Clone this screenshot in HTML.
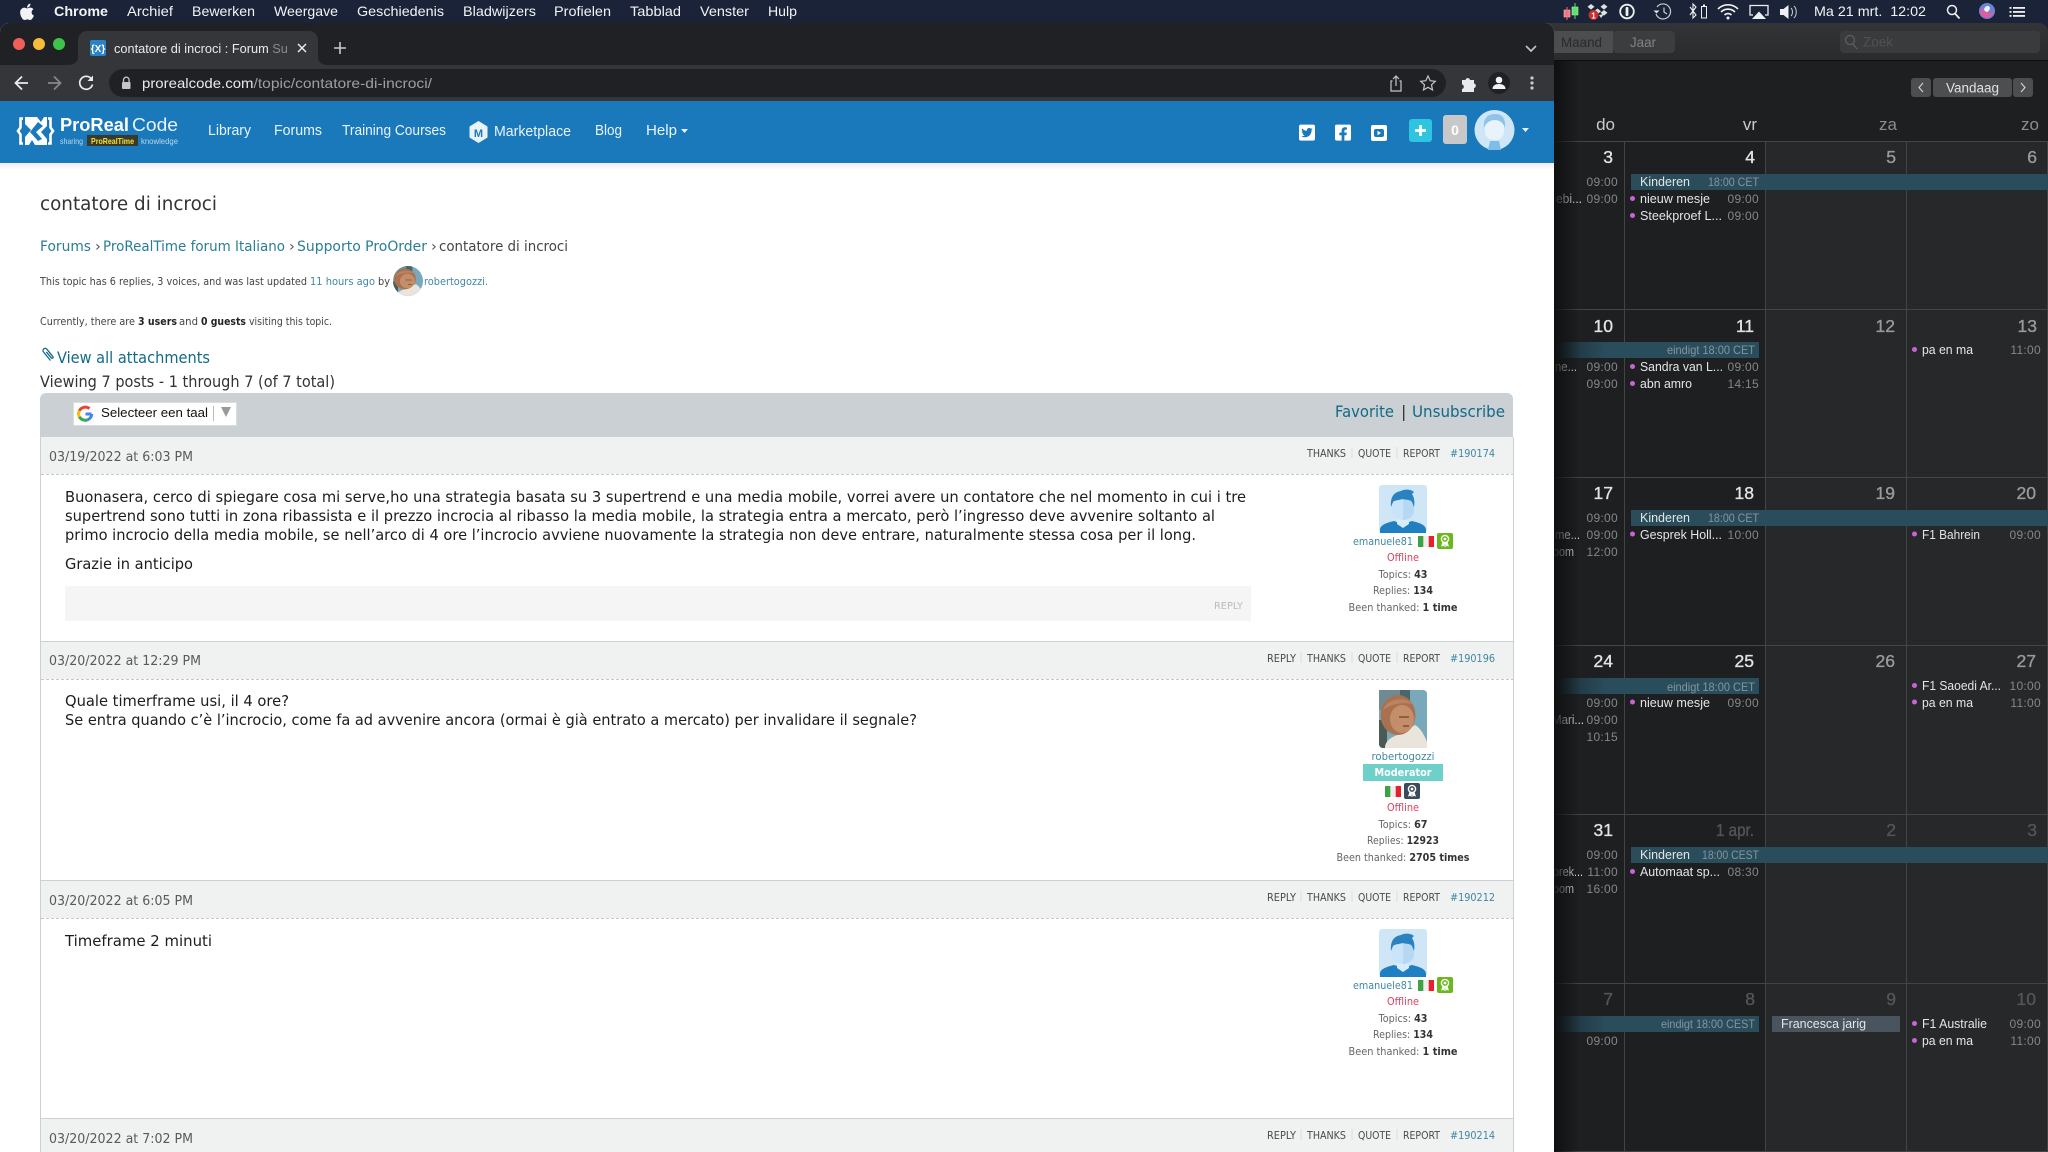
<!DOCTYPE html>
<html><head><meta charset="utf-8"><title>contatore di incroci</title>
<style>
html,body{margin:0;padding:0;background:#1a2338;width:2048px;height:1152px;overflow:hidden}
svg{display:block}
text{font-family:"Liberation Sans",sans-serif;white-space:pre}
.os{font-family:"DejaVu Sans",sans-serif}
.mb{font-size:14px;fill:#f2f3f5}
.ev{font-size:13px;fill:#e4e5e6}
.t{font-size:12px;fill:#858687;text-anchor:end;letter-spacing:.3px}
.bt{font-size:12px;fill:#83959e;text-anchor:end}
.n{font-size:17.5px;text-anchor:end;stroke-width:.35px}
.b{fill:#e2e3e4;stroke:#e2e3e4}.g{fill:#9a9b9c;stroke:#9a9b9c}.d{fill:#545557;stroke:#545557}
.nav{font-size:14.5px;fill:#eaf3fa}
.lk{font-size:10.3px;fill:#4a4a4a}
.hs{font-size:10.3px;fill:#3f88a3}
.dt{font-size:13.5px;fill:#5a5a5a}
.p{font-size:15.5px;fill:#1d1d1d}
.s{font-size:11px;fill:#666;text-anchor:middle}
.s tspan{font-weight:bold;fill:#333}
.of{font-size:11px;fill:#e0405a;text-anchor:middle}
.nm{font-size:11px;fill:#3f88a3}
</style></head>
<body>
<svg width="2048" height="1152" viewBox="0 0 2048 1152" xmlns="http://www.w3.org/2000/svg">
<defs>
<linearGradient id="fade" x1="0" x2="1" y1="0" y2="0"><stop offset="0" stop-color="#0e0f10" stop-opacity=".95"/><stop offset="1" stop-color="#0e0f10" stop-opacity="0"/></linearGradient>
<linearGradient id="bandf" x1="0" x2="1" y1="0" y2="0"><stop offset="0" stop-color="#1c2b33"/><stop offset=".25" stop-color="#2a4d5c"/></linearGradient>
<linearGradient id="navsh" x1="0" x2="0" y1="0" y2="1"><stop offset="0" stop-color="#000" stop-opacity=".07"/><stop offset="1" stop-color="#000" stop-opacity="0"/></linearGradient>
<linearGradient id="tb" x1="0" x2="0" y1="0" y2="1"><stop offset="0" stop-color="#333436"/><stop offset="1" stop-color="#2a2b2d"/></linearGradient>
<symbol id="man" viewBox="0 0 48 48">
<rect width="48" height="48" rx="3" fill="#cfe6f7"/>
<path d="M1 48v-3c0-5 6-7 14-9l9 3 9-3c8 2 14 4 14 9v3z" fill="#1f7fc1"/>
<path d="M18 32h12v7l-6 4-6-4z" fill="#d8edfb"/>
<path d="M13 18c0-8 5-11 11-11s11 3 11 11v7c0 6-5 10-11 10s-11-4-11-10z" fill="#c9e3f8"/>
<path d="M24 8c6 0 11 3 11 10v7c0 6-5 10-11 10z" fill="#b6d8f3"/>
<path d="M12 22c-1-10 3-15 10-16 3-2 10-2 13 1l-2 2c2 3 3 7 2 13l-2-5c-2-3-8-2-9-3-3 1-8 1-10 3z" fill="#2a82c0"/>
</symbol>
<symbol id="photo" viewBox="0 0 48 58" preserveAspectRatio="none">
<rect width="48" height="58" rx="4" fill="#7aa8bb"/>
<rect x="0" y="0" width="22" height="20" fill="#6f8a92"/>
<rect x="21" y="0" width="10" height="24" fill="#48666c"/>
<path d="M0 30h8v28H4a4 4 0 0 1-4-4z" fill="#4a5a55"/>
<path d="M6 58c0-8 8-12 16-14l14-9c6 3 10 12 12 17v6z" fill="#e9e5dd"/>
<ellipse cx="19" cy="25" rx="17.500" ry="20" fill="#a9714f"/>
<ellipse cx="23" cy="29" rx="12" ry="14" fill="#c58e6b"/>
<path d="M4 20c3-10 20-15 30-6-10-2-20-1-30 6z" fill="#bb8360"/>
<path d="M20 27h10M24 36h6" stroke="#7c4e36" stroke-width="1.500"/>
</symbol>
<symbol id="flag" viewBox="0 0 16 11"><rect width="5.400" height="11" fill="#3da245"/><rect x="5.400" width="5.400" height="11" fill="#eeeeee"/><rect x="10.700" width="5.300" height="11" fill="#e8202a"/></symbol>
<symbol id="rib" viewBox="0 0 16 16"><circle cx="8" cy="6" r="3.600" fill="none" stroke="#fff" stroke-width="1.400"/><circle cx="8" cy="6" r="1.400" fill="#fff"/><path d="M5.500 9l-1.500 4.600 2.200-.8 1.200 1.400.6-4zM10.500 9l1.500 4.600-2.200-.8-1.200 1.400-.6-4z" fill="#fff"/></symbol>
<clipPath id="tabc"><rect x="110" y="36" width="178" height="24"/></clipPath>
<clipPath id="win"><path d="M0 32a9 9 0 0 1 9-9h1536a9 9 0 0 1 9 9v1120H0z"/></clipPath>
<clipPath id="cal"><path d="M1540 23h499a9 9 0 0 1 9 9v1120h-508z"/></clipPath>
</defs>

<!-- menu bar -->
<rect width="2048" height="23" fill="#1a2338"/>
<path transform="translate(20 2.500) scale(.0365)" fill="#f2f3f5" d="M318.700 268.700c-.2-36.700 16.400-64.400 50-84.800-18.800-26.900-47.200-41.700-84.700-44.600-35.500-2.800-74.300 20.700-88.500 20.700-15 0-49.400-19.700-76.400-19.700C63.300 141.200 4 184.800 4 273.500q0 39.300 14.400 81.200c12.800 36.700 59 126.700 107.200 125.200 25.200-.6 43-17.900 75.800-17.900 31.800 0 48.300 17.900 76.400 17.900 48.600-.7 90.400-82.500 102.600-119.300-65.200-30.700-61.700-90-61.700-91.900zm-56.600-164.200c27.300-32.400 24.800-61.900 24-72.500-24.100 1.400-52 16.400-67.900 34.900-17.500 19.800-27.800 44.300-25.600 71.900 26.100 2 49.900-11.400 69.500-34.300z"/>
<text class="mb" x="54" y="16" font-weight="bold" textLength="54" lengthAdjust="spacingAndGlyphs">Chrome</text>
<text class="mb" x="127" y="16" textLength="46" lengthAdjust="spacingAndGlyphs">Archief</text>
<text class="mb" x="192" y="16" textLength="63" lengthAdjust="spacingAndGlyphs">Bewerken</text>
<text class="mb" x="274" y="16" textLength="64" lengthAdjust="spacingAndGlyphs">Weergave</text>
<text class="mb" x="357" y="16" textLength="87" lengthAdjust="spacingAndGlyphs">Geschiedenis</text>
<text class="mb" x="463" y="16" textLength="73" lengthAdjust="spacingAndGlyphs">Bladwijzers</text>
<text class="mb" x="554" y="16" textLength="57" lengthAdjust="spacingAndGlyphs">Profielen</text>
<text class="mb" x="630" y="16" textLength="51" lengthAdjust="spacingAndGlyphs">Tabblad</text>
<text class="mb" x="700" y="16" textLength="49" lengthAdjust="spacingAndGlyphs">Venster</text>
<text class="mb" x="768" y="16" textLength="29" lengthAdjust="spacingAndGlyphs">Hulp</text>
<!-- status icons -->
<rect x="1564" y="10" width="6" height="7" fill="#f07a8a" stroke="#ffb0bc" stroke-width=".6"/><path d="M1567 7v13" stroke="#f06a7a"/>
<rect x="1572" y="7" width="6" height="8" fill="#5fe06a" stroke="#a8f2ae" stroke-width=".6"/><path d="M1575 3v16" stroke="#5fe06a"/>
<g fill="#dfe1e4"><path d="M1591 4l3.500 2.800-3.500 2.800-3.500-2.800zM1604 4l3.500 2.800-3.500 2.800-3.500-2.800zM1597.500 8.500l3.500 2.800-3.500 2.800-3.500-2.800zM1604 10l3.500 2.800-3.500 2.800-3.500-2.800zM1599 15l5-1-3 4z"/></g><circle cx="1593.500" cy="15" r="5" fill="#c9302c"/><text x="1593.500" y="18.500" font-size="8" fill="#fff" text-anchor="middle" font-weight="bold">1</text>
<circle cx="1627" cy="11.500" r="6.800" fill="none" stroke="#eef0f2" stroke-width="1.800"/><rect x="1625.600" y="7" width="2.800" height="9" rx="1" fill="#eef0f2"/>
<g fill="none" stroke="#c9ccd0" stroke-width="1.200"><path d="M1657 7a7.500 7.500 0 1 1-1 7"/><path d="M1664 7.500v4.500l3 2"/></g><path d="M1653.500 10.500h6l-3 3z" fill="#dfe1e4"/>
<path d="M1690 7l6 8-3 3V4l3 3-6 8" fill="none" stroke="#eef0f2" stroke-width="1.100"/>
<rect x="1701.500" y="6.500" width="5" height="11.500" fill="none" stroke="#eef0f2" stroke-width="1"/><rect x="1703" y="4.500" width="2" height="1.500" fill="#eef0f2"/>
<g fill="none" stroke="#eef0f2" stroke-width="1.700"><path d="M1718 9a14 14 0 0 1 20 0M1721 12a10 10 0 0 1 14 0M1724.500 15a5 5 0 0 1 7 0"/></g><circle cx="1728" cy="18" r="1.500" fill="#eef0f2"/>
<path d="M1753 15h-3V5.500h18V15h-3" fill="none" stroke="#eef0f2" stroke-width="1.300"/><path d="M1752 19l7-7.500 7 7.500z" fill="#eef0f2"/>
<path d="M1780 9h3.500l5-4v14l-5-4H1780z" fill="#eef0f2"/><path d="M1791 8c2 2 2 6 0 8M1794 6c3 3 3 9 0 12" fill="none" stroke="#c9ccd0"/>
<text class="mb" x="1814" y="16" textLength="112" lengthAdjust="spacingAndGlyphs">Ma 21 mrt.  12:02</text>
<circle cx="1952" cy="10" r="4.500" fill="none" stroke="#eef0f2" stroke-width="1.500"/><path d="M1955 13.500l4.500 5" stroke="#eef0f2" stroke-width="1.700"/>
<circle cx="1987" cy="11" r="8" fill="#6a83d6"/><path d="M1980 12c3-6 5-3 7-1s4 4 7-1c-1 5-4 8-7 8s-6-2-7-6z" fill="#e05ca0"/><path d="M1984 9c2-4 5-4 6-1-1 5-5 5-6 1z" fill="#e8f4ff"/>
<g fill="#eef0f2"><rect x="2013" y="7" width="12" height="1.800"/><rect x="2013" y="11" width="12" height="1.800"/><rect x="2013" y="15" width="12" height="1.800"/><rect x="2009.500" y="7" width="2" height="1.800"/><rect x="2009.500" y="11" width="2" height="1.800"/><rect x="2009.500" y="15" width="2" height="1.800"/></g>

<!-- calendar window -->
<g clip-path="url(#cal)">
<rect x="1540" y="23" width="508" height="1129" fill="#1e1f21"/>
<rect x="1765" y="141" width="283" height="1011" fill="#27282a"/>
<rect x="1540" y="23" width="508" height="37" fill="url(#tb)"/>
<rect x="1540" y="60" width="508" height="1" fill="#0d0d0e"/>
<rect x="1554" y="31" width="59" height="22" fill="#4c4d4f"/>
<rect x="1613" y="31" width="62" height="22" rx="4" fill="#3c3d3f"/>
<text x="1561" y="47" font-size="14" fill="#2a2a2b" textLength="41" lengthAdjust="spacingAndGlyphs">Maand</text>
<text x="1630" y="47" font-size="14" fill="#818284" textLength="26" lengthAdjust="spacingAndGlyphs">Jaar</text>
<rect x="1840" y="31" width="200" height="22" rx="4" fill="#3a3b3d"/>
<circle cx="1850" cy="40" r="4.500" fill="none" stroke="#5f6062" stroke-width="1.200"/><path d="M1853 44l4 5" stroke="#5f6062" stroke-width="1.200"/>
<text x="1863" y="46.500" font-size="13.500" fill="#505153">Zoek</text>
<rect x="1911" y="78" width="20" height="19" rx="3" fill="#4d4e50"/>
<rect x="1933" y="78" width="79" height="19" rx="3" fill="#4d4e50"/>
<rect x="2013" y="78" width="20" height="19" rx="3" fill="#4d4e50"/>
<path d="M1923 83l-4 4.500 4 4.500M2021 83l4 4.500-4 4.500" fill="none" stroke="#d6d7d8" stroke-width="1.100"/>
<text x="1946" y="92.500" font-size="13.500" fill="#e0e1e2" textLength="53" lengthAdjust="spacingAndGlyphs">Vandaag</text>
<text x="1615" y="130" font-size="17" fill="#c9cacb" text-anchor="end">do</text>
<text x="1757" y="130" font-size="17" fill="#c9cacb" text-anchor="end">vr</text>
<text x="1897" y="130" font-size="17" fill="#8b8c8d" text-anchor="end">za</text>
<text x="2039" y="130" font-size="17" fill="#8b8c8d" text-anchor="end">zo</text>
<g stroke="#434446" stroke-width="1">
<path d="M1540 141.500H2048M1540 309.500H2048M1540 477.500H2048M1540 645.500H2048M1540 814.500H2048M1540 983.500H2048M1540 1151.500H2048"/>
<path d="M1624.500 141V1152M1765.500 141V1152M1906.500 141V1152M2047.500 141V1152"/>
</g>
<text class="n b" x="1613" y="163">3</text><text class="n b" x="1755" y="163">4</text><text class="n g" x="1896" y="163">5</text><text class="n g" x="2037" y="163">6</text>
<text class="n b" x="1613" y="332">10</text><text class="n b" x="1754" y="332">11</text><text class="n g" x="1895" y="332">12</text><text class="n g" x="2037" y="332">13</text>
<text class="n b" x="1613" y="499">17</text><text class="n b" x="1754" y="499">18</text><text class="n g" x="1895" y="499">19</text><text class="n g" x="2036" y="499">20</text>
<text class="n b" x="1613" y="667">24</text><text class="n b" x="1754" y="667">25</text><text class="n g" x="1895" y="667">26</text><text class="n g" x="2036" y="667">27</text>
<text class="n b" x="1613" y="836">31</text><text class="n d" x="1754" y="836" textLength="38" lengthAdjust="spacingAndGlyphs">1 apr.</text><text class="n d" x="1896" y="836">2</text><text class="n d" x="2037" y="836">3</text>
<text class="n d" x="1613" y="1005">7</text><text class="n d" x="1755" y="1005">8</text><text class="n d" x="1896" y="1005">9</text><text class="n d" x="2036" y="1005">10</text>

<rect x="1631" y="174" width="417" height="16" fill="#2a4d5c"/>
<rect x="1555" y="342" width="204" height="16" fill="url(#bandf)"/>
<rect x="1631" y="510" width="417" height="16" fill="#2a4d5c"/>
<rect x="1555" y="678" width="204" height="16" fill="url(#bandf)"/>
<rect x="1631" y="847" width="417" height="16" fill="#2a4d5c"/>
<rect x="1555" y="1016" width="204" height="16" fill="url(#bandf)"/>
<rect x="1772" y="1016" width="128" height="16" fill="#4a545e"/>

<text class="ev" x="1640" y="186" textLength="50" lengthAdjust="spacingAndGlyphs">Kinderen</text><text class="bt" x="1759" y="186" textLength="51" lengthAdjust="spacingAndGlyphs">18:00 CET</text>
<text class="ev" x="1640" y="522" textLength="50" lengthAdjust="spacingAndGlyphs">Kinderen</text><text class="bt" x="1759" y="522" textLength="51" lengthAdjust="spacingAndGlyphs">18:00 CET</text>
<text class="ev" x="1640" y="859" textLength="50" lengthAdjust="spacingAndGlyphs">Kinderen</text><text class="bt" x="1759" y="859" textLength="57" lengthAdjust="spacingAndGlyphs">18:00 CEST</text>
<text class="bt" x="1755" y="354" textLength="88" lengthAdjust="spacingAndGlyphs">eindigt 18:00 CET</text>
<text class="bt" x="1755" y="691" textLength="88" lengthAdjust="spacingAndGlyphs">eindigt 18:00 CET</text>
<text class="bt" x="1755" y="1028" textLength="94" lengthAdjust="spacingAndGlyphs">eindigt 18:00 CEST</text>
<text class="ev" x="1781" y="1028" textLength="85" lengthAdjust="spacingAndGlyphs">Francesca jarig</text>

<text class="t" x="1618" y="186">09:00</text><text class="ev" x="1556" y="203" textLength="26" lengthAdjust="spacingAndGlyphs">ebi...</text><text class="t" x="1618" y="203">09:00</text>
<text class="ev" x="1555" y="371" textLength="22" lengthAdjust="spacingAndGlyphs">ne...</text><text class="t" x="1618" y="371">09:00</text><text class="t" x="1618" y="388">09:00</text>
<text class="t" x="1618" y="522">09:00</text><text class="ev" x="1555" y="539" textLength="25" lengthAdjust="spacingAndGlyphs">me...</text><text class="t" x="1618" y="539">09:00</text><text class="ev" x="1553" y="556" textLength="21" lengthAdjust="spacingAndGlyphs">oom</text><text class="t" x="1618" y="556">12:00</text>
<text class="t" x="1618" y="707">09:00</text><text class="ev" x="1552" y="724" textLength="32" lengthAdjust="spacingAndGlyphs">Mari...</text><text class="t" x="1618" y="724">09:00</text><text class="t" x="1618" y="741">10:15</text>
<text class="t" x="1618" y="859">09:00</text><text class="ev" x="1553" y="876" textLength="30" lengthAdjust="spacingAndGlyphs">prek...</text><text class="t" x="1618" y="876">11:00</text><text class="ev" x="1553" y="893" textLength="21" lengthAdjust="spacingAndGlyphs">oom</text><text class="t" x="1618" y="893">16:00</text>
<text class="t" x="1618" y="1045">09:00</text>

<g fill="#c765d6">
<circle cx="1632.500" cy="198.500" r="2.500"/><circle cx="1632.500" cy="215.500" r="2.500"/><circle cx="1632.500" cy="366.500" r="2.500"/><circle cx="1632.500" cy="383.500" r="2.500"/><circle cx="1632.500" cy="534" r="2.500"/><circle cx="1632.500" cy="702" r="2.500"/><circle cx="1632.500" cy="871.500" r="2.500"/>
<circle cx="1914.500" cy="349.500" r="2.500"/><circle cx="1914.500" cy="534" r="2.500"/><circle cx="1914.500" cy="685.500" r="2.500"/><circle cx="1914.500" cy="702" r="2.500"/><circle cx="1914.500" cy="1023.500" r="2.500"/><circle cx="1914.500" cy="1040.500" r="2.500"/>
</g>
<text class="ev" x="1640" y="203" textLength="70" lengthAdjust="spacingAndGlyphs">nieuw mesje</text><text class="t" x="1759" y="203">09:00</text>
<text class="ev" x="1640" y="220" textLength="82" lengthAdjust="spacingAndGlyphs">Steekproef L...</text><text class="t" x="1759" y="220">09:00</text>
<text class="ev" x="1640" y="371" textLength="83" lengthAdjust="spacingAndGlyphs">Sandra van L...</text><text class="t" x="1759" y="371">09:00</text>
<text class="ev" x="1640" y="388" textLength="52" lengthAdjust="spacingAndGlyphs">abn amro</text><text class="t" x="1759" y="388">14:15</text>
<text class="ev" x="1640" y="539" textLength="82" lengthAdjust="spacingAndGlyphs">Gesprek Holl...</text><text class="t" x="1759" y="539">10:00</text>
<text class="ev" x="1640" y="707" textLength="70" lengthAdjust="spacingAndGlyphs">nieuw mesje</text><text class="t" x="1759" y="707">09:00</text>
<text class="ev" x="1640" y="876" textLength="80" lengthAdjust="spacingAndGlyphs">Automaat sp...</text><text class="t" x="1759" y="876">08:30</text>
<text class="ev" x="1922" y="354" textLength="51" lengthAdjust="spacingAndGlyphs">pa en ma</text><text class="t" x="2041" y="354">11:00</text>
<text class="ev" x="1922" y="539" textLength="58" lengthAdjust="spacingAndGlyphs">F1 Bahrein</text><text class="t" x="2041" y="539">09:00</text>
<text class="ev" x="1922" y="690" textLength="79" lengthAdjust="spacingAndGlyphs">F1 Saoedi Ar...</text><text class="t" x="2041" y="690">10:00</text>
<text class="ev" x="1922" y="707" textLength="51" lengthAdjust="spacingAndGlyphs">pa en ma</text><text class="t" x="2041" y="707">11:00</text>
<text class="ev" x="1922" y="1028" textLength="65" lengthAdjust="spacingAndGlyphs">F1 Australie</text><text class="t" x="2041" y="1028">09:00</text>
<text class="ev" x="1922" y="1045" textLength="51" lengthAdjust="spacingAndGlyphs">pa en ma</text><text class="t" x="2041" y="1045">11:00</text>
<rect x="1554" y="61" width="26" height="1091" fill="url(#fade)"/>
</g>

<!-- browser window -->
<g clip-path="url(#win)">
<rect x="0" y="23" width="1554" height="1129" fill="#fff"/>
<rect x="0" y="23" width="1554" height="42" fill="#202124"/>
<circle cx="19" cy="44" r="6" fill="#ee5f58"/><circle cx="39" cy="44" r="6" fill="#f5bd3a"/><circle cx="59" cy="44" r="6" fill="#3fc24b"/>
<path d="M68 65c6 0 10-3 10-8V40a9 9 0 0 1 9-9h222a9 9 0 0 1 9 9v17c0 5 4 8 10 8z" fill="#35363a"/>
<rect x="90" y="40" width="16" height="16" rx="2" fill="#2a83c4"/>
<text x="98" y="52" font-size="10" font-weight="bold" fill="#fff" text-anchor="middle">{X}</text>
<g clip-path="url(#tabc)"><text x="114" y="53" font-size="13" fill="#e8eaed" textLength="181" lengthAdjust="spacingAndGlyphs">contatore di incroci : Forum Sup</text></g>
<rect x="270" y="36" width="20" height="24" fill="#35363a" opacity=".55"/>
<path d="M298 44l8 8M306 44l-8 8" stroke="#e8eaed" stroke-width="1.500"/>
<path d="M340 42v12M334 48h12" stroke="#c8cace" stroke-width="1.600"/>
<path d="M1526 46l5 5 5-5" fill="none" stroke="#bfc1c5" stroke-width="1.700"/>
<rect x="0" y="65" width="1554" height="36" fill="#35363a"/>
<path d="M28 83H16M22 76.500L15.500 83l6.500 6.500" fill="none" stroke="#e8eaed" stroke-width="1.800"/>
<path d="M48 83h12M54 76.500l6.500 6.500-6.500 6.500" fill="none" stroke="#84868a" stroke-width="1.800"/>
<path d="M91.500 79a6.500 6.500 0 1 0 1 5.500" fill="none" stroke="#e8eaed" stroke-width="1.700"/><path d="M93 75.500v5.500h-5.500z" fill="#e8eaed"/>
<rect x="109" y="69" width="1337" height="28" rx="14" fill="#202124"/>
<rect x="122" y="82" width="8.500" height="7" rx="1" fill="#c4c6ca"/><path d="M123.500 82v-2a2.800 2.800 0 0 1 5.600 0v2" fill="none" stroke="#c4c6ca" stroke-width="1.300"/>
<text x="142" y="88" font-size="14" fill="#e8eaed" textLength="111.500" lengthAdjust="spacingAndGlyphs">prorealcode.com</text>
<text x="253.500" y="88" font-size="14" fill="#9aa0a6" textLength="178.500" lengthAdjust="spacingAndGlyphs">/topic/contatore-di-incroci/</text>
<g fill="none" stroke="#c4c6ca" stroke-width="1.200"><path d="M1392.500 81h-1.500v10h10V81h-1.500M1396 86V76M1393 79l3-3 3 3"/></g>
<path d="M1428 76l2.200 4.700 5.100.6-3.800 3.500 1 5.100-4.500-2.600-4.500 2.600 1-5.100-3.800-3.500 5.100-.6z" fill="none" stroke="#c4c6ca" stroke-width="1.200"/>
<path d="M1462 80h3.500a2.300 2.300 0 0 1 4.500 0h4v3.500a2.300 2.300 0 0 1 0 4.500V92h-12v-3a2.300 2.300 0 0 0 0-4.500z" fill="#e8eaed"/>
<circle cx="1499" cy="83" r="11" fill="#202124"/><circle cx="1499" cy="80" r="3.300" fill="#f1f3f4"/><path d="M1492.500 89c0-3.500 3-5 6.500-5s6.500 1.500 6.500 5z" fill="#f1f3f4"/>
<g fill="#c9cbcf"><circle cx="1532" cy="78" r="1.600"/><circle cx="1532" cy="83" r="1.600"/><circle cx="1532" cy="88" r="1.600"/></g>

<!-- site nav -->
<rect x="0" y="101" width="1554" height="62" fill="#1a79bb"/>
<rect x="0" y="163" width="1554" height="7" fill="url(#navsh)"/>
<!-- logo -->
<g fill="none" stroke="#fff" stroke-width="2.600">
<path d="M23 118.500h-2.500v9l-2.500 3.500 2.500 3.500v9h2.500"/>
<path d="M48 118.500h2.500v9l2.500 3.500-2.500 3.500v9h-2.500"/>
</g>
<path d="M25 117h12l4 5 3-5h3v9l-6 6 6 7v6H35l-3-5-3 5h-4v-8l6-7-6-6z" fill="#fff"/>
<path d="M38 122l5 4-7 6 6 7-4 2-8-9z" fill="#1a79bb"/>
<text x="60" y="131" font-size="18" font-weight="bold" fill="#fff" textLength="69" lengthAdjust="spacingAndGlyphs">ProReal</text>
<text x="132" y="131" font-size="18" fill="#eaf3fa" textLength="46" lengthAdjust="spacingAndGlyphs">Code</text>
<text x="60" y="144" font-size="8.500" fill="#b9d6ea" textLength="23" lengthAdjust="spacingAndGlyphs">sharing</text>
<rect x="87" y="135" width="51" height="11" fill="#3a3a2c"/>
<text x="91" y="144" font-size="8.500" font-weight="bold" fill="#f6e23a" textLength="43" lengthAdjust="spacingAndGlyphs">ProRealTime</text>
<text x="141" y="144" font-size="8.500" fill="#b9d6ea" textLength="37" lengthAdjust="spacingAndGlyphs">knowledge</text>
<text class="nav" x="208" y="135" textLength="43" lengthAdjust="spacingAndGlyphs">Library</text>
<text class="nav" x="274" y="135" textLength="48" lengthAdjust="spacingAndGlyphs">Forums</text>
<text class="nav" x="342" y="135" textLength="104" lengthAdjust="spacingAndGlyphs">Training Courses</text>
<path d="M478.500 121l9 5.500v11l-9 5.500-9-5.500v-11z" fill="#eaf3fa"/>
<text x="478.500" y="137" font-size="11" font-weight="bold" fill="#1a79bb" text-anchor="middle">M</text>
<text class="nav" x="494" y="136" textLength="77" lengthAdjust="spacingAndGlyphs">Marketplace</text>
<text class="nav" x="595" y="135" textLength="27" lengthAdjust="spacingAndGlyphs">Blog</text>
<text class="nav" x="646" y="135" textLength="31" lengthAdjust="spacingAndGlyphs">Help</text>
<path d="M681 129h7l-3.500 4z" fill="#eaf3fa"/>
<path transform="translate(1299 123.500) scale(.0357)" fill="#fff" d="M400 32H48C21.500 32 0 53.500 0 80v352c0 26.500 21.500 48 48 48h352c26.500 0 48-21.500 48-48V80c0-26.500-21.500-48-48-48zm-48.900 158.800c.2 2.800.2 5.700.2 8.500 0 86.700-66 186.600-186.600 186.600-37.200 0-71.700-10.800-100.700-29.400 5.300.6 10.400.8 15.800.8 30.700 0 58.900-10.400 81.400-28-28.800-.6-53-19.500-61.300-45.500 10.100 1.500 19.200 1.500 29.600-1.200-30-6.100-52.500-32.500-52.500-64.400v-.8c8.700 4.900 18.900 7.900 29.600 8.300a65.447 65.447 0 0 1-29.200-54.600c0-12.200 3.200-23.400 8.900-33.100 32.300 39.800 80.800 65.800 135.200 68.600-9.300-44.500 24-80.600 64-80.600 18.900 0 35.900 7.900 47.900 20.700 14.800-2.800 29-8.300 41.600-15.800-4.900 15.200-15.100 28-28.700 36.100 13.200-1.400 26-5.100 37.800-10.200-8.900 13.100-20.100 24.700-32.900 34z"/>
<path transform="translate(1335 123.500) scale(.0357)" fill="#fff" d="M400 32H48A48 48 0 0 0 0 80v352a48 48 0 0 0 48 48h137.250V327.690h-63V256h63v-54.640c0-62.150 37-96.480 93.670-96.480 27.140 0 55.520 4.840 55.520 4.840v61h-31.270c-30.810 0-40.420 19.120-40.420 38.730V256h68.780l-11 71.690h-57.780V480H400a48 48 0 0 0 48-48V80a48 48 0 0 0-48-48z"/>
<rect x="1371" y="125" width="16" height="16" rx="2" fill="#fff"/><rect x="1374" y="129" width="10" height="8" rx="2" fill="#1a79bb"/><path d="M1377.500 130.800l3.500 2.200-3.500 2.200z" fill="#fff"/>
<rect x="1409" y="119" width="23" height="23" rx="3" fill="#2fc5e0"/><path d="M1420.500 125v11M1415 130.500h11" stroke="#fff" stroke-width="2.800"/>
<rect x="1443" y="115" width="24" height="29" rx="3" fill="#c8c8c8"/><text x="1455" y="135" font-size="14" font-weight="bold" fill="#fff" text-anchor="middle">0</text>
<ellipse cx="1494.500" cy="130" rx="20" ry="20" fill="#cfe6f7"/>
<path d="M1485 124c0-7 4-10 9.500-10s9.500 3 9.500 10v8c0 5-4 8-9.500 8s-9.500-3-9.500-8z" fill="#e8f3fc"/>
<path d="M1484 128c-1-10 4-14 11-14s11 4 10 14c-2-6-6-8-10-8s-9 2-11 8z" fill="#8fc3ea"/>
<path d="M1488 150l2-9h9l2 9z" fill="#7fbde8"/>
<path d="M1522 128h7l-3.500 4z" fill="#eaf3fa"/>

<!-- page header -->
<text class="os" x="40" y="210" font-size="18.500" fill="#333" textLength="177" lengthAdjust="spacingAndGlyphs">contatore di incroci</text>
<text class="os" x="40" y="251" font-size="14.500" fill="#2a7d96" textLength="51" lengthAdjust="spacingAndGlyphs">Forums</text>
<text class="os" x="95" y="251" font-size="14.500" fill="#555">›</text>
<text class="os" x="103" y="251" font-size="14.500" fill="#2a7d96" textLength="182" lengthAdjust="spacingAndGlyphs">ProRealTime forum Italiano</text>
<text class="os" x="289" y="251" font-size="14.500" fill="#555">›</text>
<text class="os" x="297" y="251" font-size="14.500" fill="#2a7d96" textLength="130" lengthAdjust="spacingAndGlyphs">Supporto ProOrder</text>
<text class="os" x="431" y="251" font-size="14.500" fill="#555">›</text>
<text class="os" x="439" y="251" font-size="14.500" fill="#444" textLength="129" lengthAdjust="spacingAndGlyphs">contatore di incroci</text>
<text class="os" x="40" y="285" font-size="11" fill="#444" textLength="267" lengthAdjust="spacingAndGlyphs">This topic has 6 replies, 3 voices, and was last updated</text>
<text class="os" x="310" y="285" font-size="11" fill="#3f88a3" textLength="65" lengthAdjust="spacingAndGlyphs">11 hours ago</text>
<text class="os" x="378" y="285" font-size="11" fill="#444" textLength="12" lengthAdjust="spacingAndGlyphs">by</text>
<clipPath id="rc"><circle cx="408" cy="281" r="15"/></clipPath>
<g clip-path="url(#rc)"><use href="#photo" x="393" y="266" width="30" height="30"/></g>
<text class="os" x="424" y="285" font-size="11" fill="#3f88a3" textLength="64" lengthAdjust="spacingAndGlyphs">robertogozzi.</text>
<text class="os" x="40" y="325" font-size="11" fill="#444" textLength="95" lengthAdjust="spacingAndGlyphs">Currently, there are</text>
<text class="os" x="138" y="325" font-size="11" font-weight="bold" fill="#222" textLength="39" lengthAdjust="spacingAndGlyphs">3 users</text>
<text class="os" x="179" y="325" font-size="11" fill="#444" textLength="19" lengthAdjust="spacingAndGlyphs">and</text>
<text class="os" x="201" y="325" font-size="11" font-weight="bold" fill="#222" textLength="45" lengthAdjust="spacingAndGlyphs">0 guests</text>
<text class="os" x="249" y="325" font-size="11" fill="#444" textLength="83" lengthAdjust="spacingAndGlyphs">visiting this topic.</text>
<path d="M50.500 360.500l-7-8.500a2.200 2.200 0 0 1 3.400-2.800l6 7.500a1 1 0 0 1-1.600 1.200l-5-6" fill="none" stroke="#166a82" stroke-width="1.300"/>
<text class="os" x="57" y="363" font-size="16" fill="#126a85" textLength="153" lengthAdjust="spacingAndGlyphs">View all attachments</text>
<text class="os" x="40" y="387" font-size="16" fill="#333" textLength="295" lengthAdjust="spacingAndGlyphs">Viewing 7 posts - 1 through 7 (of 7 total)</text>

<!-- forum box -->
<path d="M40 1152V399a6 6 0 0 1 6-6h1461a6 6 0 0 1 6 6v753z" fill="#fff"/>
<path d="M40 437V399a6 6 0 0 1 6-6h1461a6 6 0 0 1 6 6v38z" fill="#cbd0d4"/>
<path d="M40.500 437V1152M1513.500 437V1152" stroke="#cbd0d4" stroke-width="1"/>
<rect x="73.500" y="402.500" width="163" height="23" fill="#fff" stroke="#dcdcdc"/>
<g fill="none" stroke-width="3">
<path d="M91.500 414h-6" stroke="#4285f4"/>
<path d="M91.800 414a6.500 6.500 0 0 1-4.200 5.800" stroke="#4285f4"/>
<path d="M87.600 419.800a6.800 6.800 0 0 1-8.300-3" stroke="#34a853"/>
<path d="M79.300 416.800a6.800 6.800 0 0 1 0-6" stroke="#fbbc05"/>
<path d="M79.300 410.800a6.800 6.800 0 0 1 10.200-2.200" stroke="#ea4335"/>
</g>
<text x="101" y="417" font-size="13" fill="#111" textLength="107" lengthAdjust="spacingAndGlyphs">Selecteer een taal</text>
<rect x="213" y="406" width="1" height="15" fill="#bbb"/>
<path d="M221 407h10l-5 10z" fill="#999"/>
<text class="os" x="1335" y="417" font-size="16" fill="#126a85" textLength="59" lengthAdjust="spacingAndGlyphs">Favorite</text>
<text class="os" x="1401" y="417" font-size="16" fill="#333">|</text>
<text class="os" x="1412" y="417" font-size="16" fill="#126a85" textLength="93" lengthAdjust="spacingAndGlyphs">Unsubscribe</text>

<!-- post 1 -->
<rect x="41" y="437" width="1472" height="37" fill="#f0f1f1"/>
<path d="M41 474.500H1513" stroke="#c8c8c8" stroke-dasharray="3 2"/>
<text class="os dt" x="49" y="461" textLength="144" lengthAdjust="spacingAndGlyphs">03/19/2022 at 6:03 PM</text>
<text class="os lk" x="1307" y="457" textLength="39" lengthAdjust="spacingAndGlyphs">THANKS</text>
<text class="os lk" x="1358" y="457" textLength="33" lengthAdjust="spacingAndGlyphs">QUOTE</text>
<text class="os lk" x="1403" y="457" textLength="37" lengthAdjust="spacingAndGlyphs">REPORT</text>
<text class="os hs" x="1450" y="457" textLength="45" lengthAdjust="spacingAndGlyphs">#190174</text>
<path d="M1352 447v11M1397 447v11" stroke="#ddd"/>
<text class="os p" x="65" y="502" textLength="1181" lengthAdjust="spacingAndGlyphs">Buonasera, cerco di spiegare cosa mi serve,ho una strategia basata su 3 supertrend e una media mobile, vorrei avere un contatore che nel momento in cui i tre</text>
<text class="os p" x="65" y="521" textLength="1150" lengthAdjust="spacingAndGlyphs">supertrend sono tutti in zona ribassista e il prezzo incrocia al ribasso la media mobile, la strategia entra a mercato, però l’ingresso deve avvenire soltanto al</text>
<text class="os p" x="65" y="540" textLength="1131" lengthAdjust="spacingAndGlyphs">primo incrocio della media mobile, se nell’arco di 4 ore l’incrocio avviene nuovamente la strategia non deve entrare, naturalmente stessa cosa per il long.</text>
<text class="os p" x="65" y="569" textLength="128" lengthAdjust="spacingAndGlyphs">Grazie in anticipo</text>
<rect x="65" y="586" width="1186" height="35" fill="#f5f5f5"/>
<text class="os" x="1214" y="609" font-size="10" fill="#bbb" textLength="29" lengthAdjust="spacingAndGlyphs">REPLY</text>
<use href="#man" x="1379" y="485" width="48" height="48"/>
<text class="os nm" x="1353" y="545" textLength="60" lengthAdjust="spacingAndGlyphs">emanuele81</text>
<use href="#flag" x="1418" y="536" width="16" height="11"/>
<rect x="1437" y="533" width="16" height="16" rx="2" fill="#6bb81e"/><use href="#rib" x="1437" y="533" width="16" height="16"/>
<text class="os of" x="1403" y="561" textLength="32" lengthAdjust="spacingAndGlyphs">Offline</text>
<text class="os s" x="1403" y="578" textLength="49" lengthAdjust="spacingAndGlyphs">Topics: <tspan>43</tspan></text>
<text class="os s" x="1403" y="594" textLength="60" lengthAdjust="spacingAndGlyphs">Replies: <tspan>134</tspan></text>
<text class="os s" x="1403" y="611" textLength="109" lengthAdjust="spacingAndGlyphs">Been thanked: <tspan>1 time</tspan></text>
<rect x="41" y="641" width="1472" height="1" fill="#cbd0d4"/>

<!-- post 2 -->
<rect x="41" y="642" width="1472" height="37" fill="#f0f1f1"/>
<path d="M41 679.500H1513" stroke="#c8c8c8" stroke-dasharray="3 2"/>
<text class="os dt" x="49" y="665" textLength="152" lengthAdjust="spacingAndGlyphs">03/20/2022 at 12:29 PM</text>
<text class="os lk" x="1267" y="662" textLength="29" lengthAdjust="spacingAndGlyphs">REPLY</text>
<text class="os lk" x="1307" y="662" textLength="39" lengthAdjust="spacingAndGlyphs">THANKS</text>
<text class="os lk" x="1358" y="662" textLength="33" lengthAdjust="spacingAndGlyphs">QUOTE</text>
<text class="os lk" x="1403" y="662" textLength="37" lengthAdjust="spacingAndGlyphs">REPORT</text>
<text class="os hs" x="1450" y="662" textLength="45" lengthAdjust="spacingAndGlyphs">#190196</text>
<path d="M1301 652v11M1352 652v11M1397 652v11" stroke="#ddd"/>
<text class="os p" x="65" y="706" textLength="224" lengthAdjust="spacingAndGlyphs">Quale timerframe usi, il 4 ore?</text>
<text class="os p" x="65" y="725" textLength="852" lengthAdjust="spacingAndGlyphs">Se entra quando c’è l’incrocio, come fa ad avvenire ancora (ormai è già entrato a mercato) per invalidare il segnale?</text>
<use href="#photo" x="1379" y="690" width="48" height="58"/>
<text class="os nm" x="1403" y="760" text-anchor="middle" textLength="63" lengthAdjust="spacingAndGlyphs">robertogozzi</text>
<rect x="1363" y="764" width="80" height="17" fill="#6fcfc9"/>
<text class="os" x="1403" y="776" font-size="11" font-weight="bold" fill="#fff" text-anchor="middle" textLength="57" lengthAdjust="spacingAndGlyphs">Moderator</text>
<use href="#flag" x="1385" y="786" width="16" height="11"/>
<rect x="1404" y="783" width="16" height="16" rx="2" fill="#3d4a5c"/><use href="#rib" x="1404" y="783" width="16" height="16"/>
<text class="os of" x="1403" y="811" textLength="32" lengthAdjust="spacingAndGlyphs">Offline</text>
<text class="os s" x="1403" y="828" textLength="49" lengthAdjust="spacingAndGlyphs">Topics: <tspan>67</tspan></text>
<text class="os s" x="1403" y="844" textLength="72" lengthAdjust="spacingAndGlyphs">Replies: <tspan>12923</tspan></text>
<text class="os s" x="1403" y="861" textLength="133" lengthAdjust="spacingAndGlyphs">Been thanked: <tspan>2705 times</tspan></text>
<rect x="41" y="880" width="1472" height="1" fill="#cbd0d4"/>

<!-- post 3 -->
<rect x="41" y="881" width="1472" height="37" fill="#f0f1f1"/>
<path d="M41 918.500H1513" stroke="#c8c8c8" stroke-dasharray="3 2"/>
<text class="os dt" x="49" y="905" textLength="144" lengthAdjust="spacingAndGlyphs">03/20/2022 at 6:05 PM</text>
<text class="os lk" x="1267" y="901" textLength="29" lengthAdjust="spacingAndGlyphs">REPLY</text>
<text class="os lk" x="1307" y="901" textLength="39" lengthAdjust="spacingAndGlyphs">THANKS</text>
<text class="os lk" x="1358" y="901" textLength="33" lengthAdjust="spacingAndGlyphs">QUOTE</text>
<text class="os lk" x="1403" y="901" textLength="37" lengthAdjust="spacingAndGlyphs">REPORT</text>
<text class="os hs" x="1450" y="901" textLength="45" lengthAdjust="spacingAndGlyphs">#190212</text>
<path d="M1301 891v11M1352 891v11M1397 891v11" stroke="#ddd"/>
<text class="os p" x="65" y="946" textLength="147" lengthAdjust="spacingAndGlyphs">Timeframe 2 minuti</text>
<use href="#man" x="1379" y="929" width="48" height="48"/>
<text class="os nm" x="1353" y="989" textLength="60" lengthAdjust="spacingAndGlyphs">emanuele81</text>
<use href="#flag" x="1418" y="980" width="16" height="11"/>
<rect x="1437" y="977" width="16" height="16" rx="2" fill="#6bb81e"/><use href="#rib" x="1437" y="977" width="16" height="16"/>
<text class="os of" x="1403" y="1005" textLength="32" lengthAdjust="spacingAndGlyphs">Offline</text>
<text class="os s" x="1403" y="1022" textLength="49" lengthAdjust="spacingAndGlyphs">Topics: <tspan>43</tspan></text>
<text class="os s" x="1403" y="1038" textLength="60" lengthAdjust="spacingAndGlyphs">Replies: <tspan>134</tspan></text>
<text class="os s" x="1403" y="1055" textLength="109" lengthAdjust="spacingAndGlyphs">Been thanked: <tspan>1 time</tspan></text>
<rect x="41" y="1118" width="1472" height="1" fill="#cbd0d4"/>

<!-- post 4 -->
<rect x="41" y="1119" width="1472" height="33" fill="#f0f1f1"/>
<text class="os dt" x="49" y="1143" textLength="144" lengthAdjust="spacingAndGlyphs">03/20/2022 at 7:02 PM</text>
<text class="os lk" x="1267" y="1139" textLength="29" lengthAdjust="spacingAndGlyphs">REPLY</text>
<text class="os lk" x="1307" y="1139" textLength="39" lengthAdjust="spacingAndGlyphs">THANKS</text>
<text class="os lk" x="1358" y="1139" textLength="33" lengthAdjust="spacingAndGlyphs">QUOTE</text>
<text class="os lk" x="1403" y="1139" textLength="37" lengthAdjust="spacingAndGlyphs">REPORT</text>
<text class="os hs" x="1450" y="1139" textLength="45" lengthAdjust="spacingAndGlyphs">#190214</text>
<path d="M1301 1129v11M1352 1129v11M1397 1129v11" stroke="#ddd"/>
</g>
</svg>
</body></html>
